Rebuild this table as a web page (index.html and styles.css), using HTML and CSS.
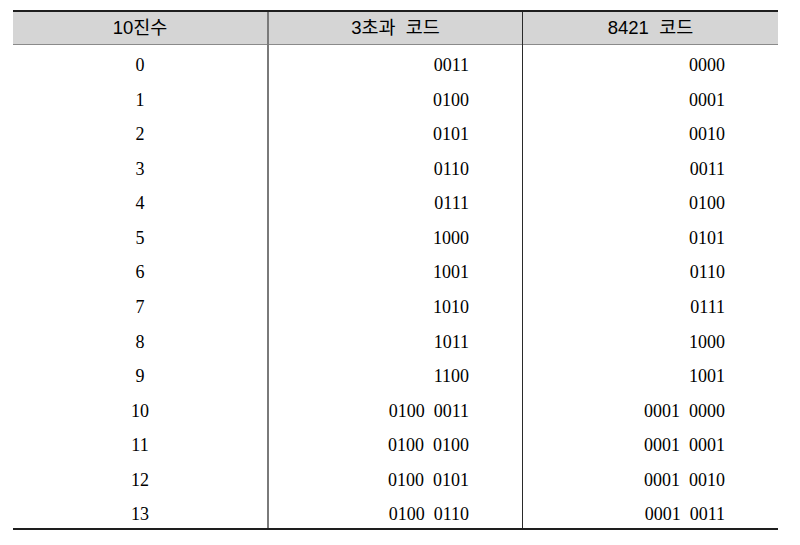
FILE: index.html
```html
<!DOCTYPE html>
<html lang="ko">
<head>
<meta charset="utf-8">
<title>3초과 코드</title>
<link rel="stylesheet" href="styles.css">
</head>
<body>
<div class="code-table">
  <div class="hd c1">10진수</div>
  <div class="hd c2">3초과  코드</div>
  <div class="hd c3">8421  코드</div>

  <div class="cell c1">0</div><div class="cell c2 num">0011</div><div class="cell c3 num">0000</div>
  <div class="cell c1">1</div><div class="cell c2 num">0100</div><div class="cell c3 num">0001</div>
  <div class="cell c1">2</div><div class="cell c2 num">0101</div><div class="cell c3 num">0010</div>
  <div class="cell c1">3</div><div class="cell c2 num">0110</div><div class="cell c3 num">0011</div>
  <div class="cell c1">4</div><div class="cell c2 num">0111</div><div class="cell c3 num">0100</div>
  <div class="cell c1">5</div><div class="cell c2 num">1000</div><div class="cell c3 num">0101</div>
  <div class="cell c1">6</div><div class="cell c2 num">1001</div><div class="cell c3 num">0110</div>
  <div class="cell c1">7</div><div class="cell c2 num">1010</div><div class="cell c3 num">0111</div>
  <div class="cell c1">8</div><div class="cell c2 num">1011</div><div class="cell c3 num">1000</div>
  <div class="cell c1">9</div><div class="cell c2 num">1100</div><div class="cell c3 num">1001</div>
  <div class="cell c1">10</div><div class="cell c2 num">0100  0011</div><div class="cell c3 num">0001  0000</div>
  <div class="cell c1">11</div><div class="cell c2 num">0100  0100</div><div class="cell c3 num">0001  0001</div>
  <div class="cell c1">12</div><div class="cell c2 num">0100  0101</div><div class="cell c3 num">0001  0010</div>
  <div class="cell c1">13</div><div class="cell c2 num">0100  0110</div><div class="cell c3 num">0001  0011</div>
</div>
</body>
</html>
```
FILE: styles.css
```css
html, body {
  margin: 0;
  padding: 0;
  background: #ffffff;
}

.code-table {
  margin: 10px 0 0 13px;
  width: 765px;
  display: grid;
  grid-template-columns: 254px 255px 256px;
  grid-template-rows: 32px repeat(14, 34.571px);
  border-top: 2px solid #1e1e1e;
  border-bottom: 2px solid #1e1e1e;
  box-sizing: content-box;
}

.hd {
  background: #d5d5d5;
  border-bottom: 1px solid #8a8a8a;
  font-family: "Liberation Sans", "Noto Sans CJK KR", sans-serif;
  font-size: 18.5px;
  line-height: 20px;
  color: #000000;
  text-align: center;
  white-space: pre;
  padding-top: 6px;
  box-sizing: border-box;
  height: 33px;
}

.cell {
  font-family: "Liberation Serif", "Times New Roman", serif;
  font-size: 18px;
  line-height: 26.57px;
  padding-top: 8px;
  color: #000000;
  text-align: center;
  white-space: pre;
  box-sizing: border-box;
}

.c2 {
  border-left: 2px solid #7a7a7a;
}

.c3 {
  border-left: 1px solid #2a2a2a;
}

.num {
  text-align: right;
  padding-right: 53px;
}
```
